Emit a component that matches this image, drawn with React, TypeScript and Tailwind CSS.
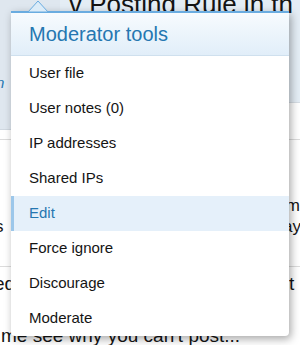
const items = [
  'User file',
  'User notes (0)',
  'IP addresses',
  'Shared IPs',
  'Edit',
  'Force ignore',
  'Discourage',
  'Moderate',
];

export default function App() {
  return (
    <div className="relative w-[300px] h-[345px] overflow-hidden bg-white font-['Liberation_Sans',Arial,sans-serif] text-[#141414]">
      {/* page behind the menu */}
      <div className="flex flex-col">
        <div className="flex h-[140px] border-b border-[#dcdcdc]">
          <div className="w-[60px] h-[130px] bg-[#dfe7ef] border-b border-[#d0d8e0] flex flex-col">
            <div className="h-[73px]" />
            <div className="-ml-[4px] text-[15px] leading-[20px] italic text-[#2577b1]">n</div>
          </div>
          <div className="flex-1 flex flex-col">
            <div className="h-[103px] bg-[#e4edf5] border-b border-[#d6dde4]">
              <div className="-mt-[12px] pl-[9px] text-[26px] leading-[32px] whitespace-nowrap">v Posting Rule in th</div>
            </div>
          </div>
        </div>
        <div className="h-[127px] border-b border-[#dcdcdc] pt-[55px] text-[17px] leading-[21px]">
          <div className="flex justify-end whitespace-nowrap">
            <span className="pr-[0px]">m</span>
          </div>
          <div className="flex justify-between whitespace-nowrap">
            <span className="-ml-[5px]">s</span>
            <span className="-mr-[1px]">ay</span>
          </div>
        </div>
        <div className="h-[59px] pt-[6px] text-[19px] leading-[22px] flex justify-between whitespace-nowrap">
          <span className="-ml-[6px]">ed</span>
          <span className="-mr-[6px]">t r</span>
        </div>
        <div className="text-[19px] leading-[20px] pl-[1px] whitespace-nowrap">me see why you can't post...</div>
      </div>

      {/* dropdown menu */}
      <div className="absolute left-[11px] top-[11px] w-[278px] rounded-b-[4px] bg-white shadow-[2px_3px_8px_rgba(0,0,0,0.35)]">
        <svg className="absolute left-[17px] -top-[11px]" width="20" height="12" viewBox="0 0 20 12">
          <polygon points="0,12 10,1 20,12" fill="#dcecf8" stroke="#6aace0" strokeWidth="1" />
        </svg>
        <div className="h-[45px] border-t-2 border-[#6aace0] border-b border-b-[#cfe0ee] bg-gradient-to-b from-[#f7fbfe] to-[#e1eef9] pl-[18px] flex items-center text-[20px] text-[#2577b1]">
          Moderator tools
        </div>
        <div className="flex flex-col">
          {items.map((item) =>
            item === 'Edit' ? (
              <div key={item} className="h-[35px] flex items-center pl-[15px] border-l-[3px] border-[#9cc7ea] bg-[#e5f0fa] text-[15px] text-[#2577b1]">
                {item}
              </div>
            ) : (
              <div key={item} className="h-[35px] flex items-center pl-[18px] text-[15px]">
                {item}
              </div>
            )
          )}
        </div>
      </div>
    </div>
  );
}
